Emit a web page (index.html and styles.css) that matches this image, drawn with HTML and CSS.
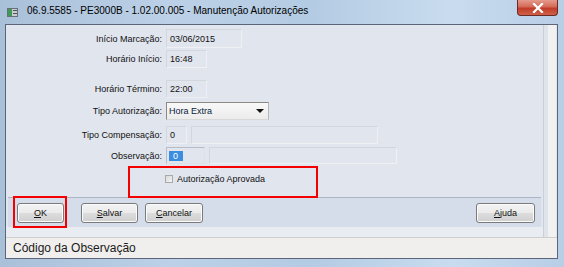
FILE: index.html
```html
<!DOCTYPE html>
<html>
<head>
<meta charset="utf-8">
<link rel="stylesheet" href="styles.css">
</head>
<body>
<div class="window">
  <div class="titlebar">
    <svg class="appicon" width="11" height="9" viewBox="0 0 11 9">
      <rect x="0.5" y="0.5" width="10" height="8" fill="#c8ccd2" stroke="#6a7078"/>
      <rect x="1" y="1" width="4" height="7" fill="#3e9a55"/>
      <rect x="6" y="2" width="4" height="1" fill="#555"/>
      <rect x="6" y="5" width="4" height="1" fill="#555"/>
    </svg>
    <span class="title">06.9.5585 - PE3000B - 1.02.00.005 - Manutenção Autorizações</span>
    <div class="close">
      <svg width="12" height="10" viewBox="0 0 12 10"><path d="M2 1 L10 9 M10 1 L2 9" stroke="#fff" stroke-width="2.2" stroke-linecap="square"/></svg>
    </div>
  </div>
  <div class="client">
    <div class="top">
      <div class="panel">
        <div class="form">
          <div class="row r1">
            <label class="lbl">Início Marcação:</label>
            <div class="field w76 h19">03/06/2015</div>
          </div>
          <div class="row r2">
            <label class="lbl">Horário Início:</label>
            <div class="field w41">16:48</div>
          </div>
          <div class="row r3">
            <label class="lbl">Horário Término:</label>
            <div class="field w41">22:00</div>
          </div>
          <div class="row r4">
            <label class="lbl">Tipo Autorização:</label>
            <div class="select"><span>Hora Extra</span><span class="arrow"></span></div>
          </div>
          <div class="row r5">
            <label class="lbl">Tipo Compensação:</label>
            <div class="field w21">0</div>
            <div class="field w187 ml4"></div>
          </div>
          <div class="row r6">
            <label class="lbl">Observação:</label>
            <div class="field focus w39"><span class="sel">0</span></div>
            <div class="field w188 ml4"></div>
          </div>
          <div class="row r7">
            <span class="lbl"></span>
            <span class="check"></span>
            <span class="checklbl">Autorização Aprovada</span>
          </div>
        </div>
        <div class="buttonbar">
          <button class="btn w47"><u>O</u>K</button>
          <button class="btn w57 ml17"><u>S</u>alvar</button>
          <button class="btn w58 ml7"><u>C</u>ancelar</button>
          <button class="btn w59 right"><u>A</u>juda</button>
        </div>
        <div class="below"></div>
      </div>
      <div class="strip"><div class="strip-a"></div><div class="strip-b"></div></div>
    </div>
    <div class="status">Código da Observação</div>
  </div>
  <div class="mark mark-ok"></div>
  <div class="mark mark-check"></div>
</div>
</body>
</html>
```
FILE: styles.css
```css
* { box-sizing: border-box; }
html, body { margin: 0; padding: 0; }
body {
  width: 564px;
  height: 267px;
  overflow: hidden;
  font-family: "Liberation Sans", Arial, sans-serif;
}
.window {
  position: relative;
  width: 564px;
  height: 267px;
  display: flex;
  flex-direction: column;
  background: linear-gradient(to right, #a9c0d9 0%, #bcd1e7 30%, #b3cbe3 55%, #c9dcef 80%, #b8cee6 100%);
}
.titlebar {
  height: 24px;
  display: flex;
  align-items: flex-start;
  padding-left: 7px;
}
.appicon { margin-top: 8px; flex: none; }
.title {
  margin-left: 9px;
  margin-top: 5px;
  font-size: 10px;
  line-height: 12px;
  color: #000;
  white-space: nowrap;
}
.close {
  margin-left: auto;
  margin-right: 6px;
  width: 41px;
  height: 16px;
  border: 1px solid #6b2a25;
  border-top: none;
  border-radius: 0 0 4px 4px;
  background: linear-gradient(#e49a8c 0%, #d46a58 45%, #c13c28 55%, #d0614a 100%);
  display: flex;
  align-items: center;
  justify-content: center;
}
.client {
  flex: 1;
  margin: 0 6px 8px 5px;
  border: 1px solid #5b6778;
  display: flex;
  flex-direction: column;
  background: #eceef2;
}
.top {
  height: 212px;
  display: flex;
}
.panel {
  width: 538px;
  display: flex;
  flex-direction: column;
  background: #e1e5ee;
  border-right: 1px solid #c9cfd9;
}
.form {
  flex: 1;
  padding-top: 4px;
  font-size: 9px;
  color: #111;
}
.row {
  display: flex;
  align-items: center;
  height: 18px;
}
.r1 { height: 19px; }
.r2 { margin-top: 2px; }
.r3 { margin-top: 12px; }
.r4 { margin-top: 4px; }
.r5 { margin-top: 6px; }
.r6 { margin-top: 3px; height: 17px; }
.r7 { margin-top: 10px; height: 10px; }
.lbl {
  width: 156px;
  margin-right: 4px;
  text-align: right;
  white-space: nowrap;
  flex: none;
}
.field {
  height: 100%;
  border: 1px solid #d2d6dd;
  border-right-color: #eef0f4;
  border-bottom-color: #eef0f4;
  padding-left: 3px;
  display: flex;
  align-items: center;
  flex: none;
}
.focus {
  border-color: #b7bcc6 #dde1e8 #dde1e8 #b7bcc6;
  padding-left: 2px;
}
.sel {
  background: #3b8de0;
  color: #fff;
  height: 10px;
  line-height: 10px;
  width: 14px;
  padding-left: 4px;
}
.w76 { width: 76px; }
.w41 { width: 41px; }
.w21 { width: 21px; }
.w187 { width: 187px; }
.w39 { width: 39px; }
.w188 { width: 188px; }
.ml4 { margin-left: 4px; }
.select {
  width: 103px;
  height: 100%;
  border: 1px solid #8d8a85;
  border-right-color: #b8b8b8;
  border-bottom-color: #d8d8d8;
  background: linear-gradient(#f8f8f8, #ececec);
  display: flex;
  align-items: center;
  padding-left: 2px;
  padding-right: 4px;
  color: #0a1a3a;
}
.arrow {
  margin-left: auto;
  width: 0;
  height: 0;
  border-left: 4px solid transparent;
  border-right: 4px solid transparent;
  border-top: 4px solid #111;
}
.check {
  width: 8px;
  height: 8px;
  border: 1px solid #a9a9a9;
  background: linear-gradient(135deg, #d9d9d9, #f4f4f4);
  flex: none;
  margin-left: -1px;
}
.checklbl {
  margin-left: 4px;
  white-space: nowrap;
}
.buttonbar {
  height: 30px;
  margin: 0 2px;
  border-top: 1px solid #aab5c7;
  background: #d5dcea;
  display: flex;
  align-items: flex-start;
  padding: 5px 6px 0 9px;
}
.btn {
  height: 20px;
  border: 1px solid #7a7a7a;
  border-radius: 3px;
  background: linear-gradient(#f3f3f3 0%, #ebebeb 48%, #dcdcdc 52%, #cfcfcf 100%);
  font-family: "Liberation Sans", Arial, sans-serif;
  font-size: 9px;
  color: #111;
  padding: 0;
  box-shadow: inset 0 0 0 1px #fbfbfb;
}
.w47 { width: 47px; }
.w57 { width: 57px; }
.w58 { width: 58px; }
.w59 { width: 59px; }
.ml17 { margin-left: 17px; }
.ml7 { margin-left: 7px; }
.right { margin-left: auto; }
.below {
  height: 10px;
  background: #e9ecf1;
}
.strip {
  flex: 1;
  display: flex;
}
.strip-a { width: 4px; background: #dfe3ea; }
.strip-b { flex: 1; background: #f1f1f1; border-right: 1px solid #dfe6ee; }
.status {
  flex: 1;
  border-top: 1px solid #cfcfcf;
  background: #f0efed;
  font-size: 12px;
  line-height: 20px;
  padding-left: 7px;
  color: #1a1a1a;
}
.mark {
  position: absolute;
  border: 2px solid #f40000;
}
.mark-ok { left: 13px; top: 196px; width: 54px; height: 32px; }
.mark-check { left: 128px; top: 166px; width: 190px; height: 32px; }
```
